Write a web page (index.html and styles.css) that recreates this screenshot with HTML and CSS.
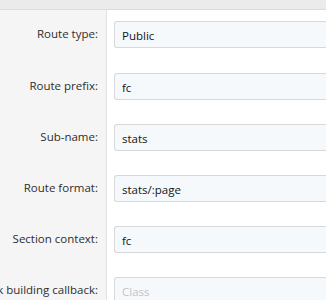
FILE: index.html
```html
<!DOCTYPE html>
<html lang="en">
<head>
  <meta charset="UTF-8">
  <title>Route options</title>
  <link rel="stylesheet" href="styles.css">
</head>
<body>

<div class="topbar"></div>

<div class="formulario">
  <div class="fila">
    <label class="etiqueta" for="tipo">Route type:</label>
    <div class="campo"><input type="text" id="tipo" value="Public"></div>
  </div>
  <div class="fila">
    <label class="etiqueta" for="prefijo">Route prefix:</label>
    <div class="campo"><input type="text" id="prefijo" value="fc"></div>
  </div>
  <div class="fila">
    <label class="etiqueta" for="subnombre">Sub-name:</label>
    <div class="campo"><input type="text" id="subnombre" value="stats"></div>
  </div>
  <div class="fila">
    <label class="etiqueta" for="formato">Route format:</label>
    <div class="campo"><input type="text" id="formato" value="stats/:page"></div>
  </div>
  <div class="fila">
    <label class="etiqueta" for="contexto">Section context:</label>
    <div class="campo"><input type="text" id="contexto" value="fc"></div>
  </div>
  <div class="fila">
    <label class="etiqueta" for="callback">Link building callback:</label>
    <div class="campo"><input type="text" id="callback" placeholder="Class"></div>
  </div>
</div>

</body>
</html>
```

FILE: styles.css
```css
body {
  margin: 0;
  font-family: "Open Sans", "Noto Sans", sans-serif;
  font-size: 11.5px;
  color: #141414;
  background: #fff;
  overflow: hidden;
}
.topbar {
  height: 9px;
  background-color: #ebebeb;
  border-bottom: 1px solid #dcdcdc;
}
.formulario {
  display: grid;
  grid-template-columns: 107px 1fr;
}
.fila {
  display: contents;
}
.etiqueta {
  background-color: #f5f5f5;
  border-right: 1px solid #e2e2e2;
  display: flex;
  justify-content: flex-end;
  align-items: flex-start;
  padding: 17px 8px 0 0;
  white-space: nowrap;
  color: #2e2e2e;
  height: 34px;
}
.campo {
  padding: 12px 0 12px 7px;
  overflow: hidden;
}
.fila:first-child .etiqueta {
  padding-top: 16px;
  height: 35px;
}
.fila:first-child .campo {
  padding-top: 11px;
}
input {
  box-sizing: border-box;
  width: 240px;
  height: 27px;
  padding: 2px 7px 0;
  border: 1px solid #d8d8d8;
  border-right: none;
  border-radius: 3px 0 0 3px;
  background-color: #f5f9fc;
  font-family: inherit;
  font-size: 11.5px;
  color: #141414;
}
input::placeholder {
  color: #c4c4c4;
}
```
